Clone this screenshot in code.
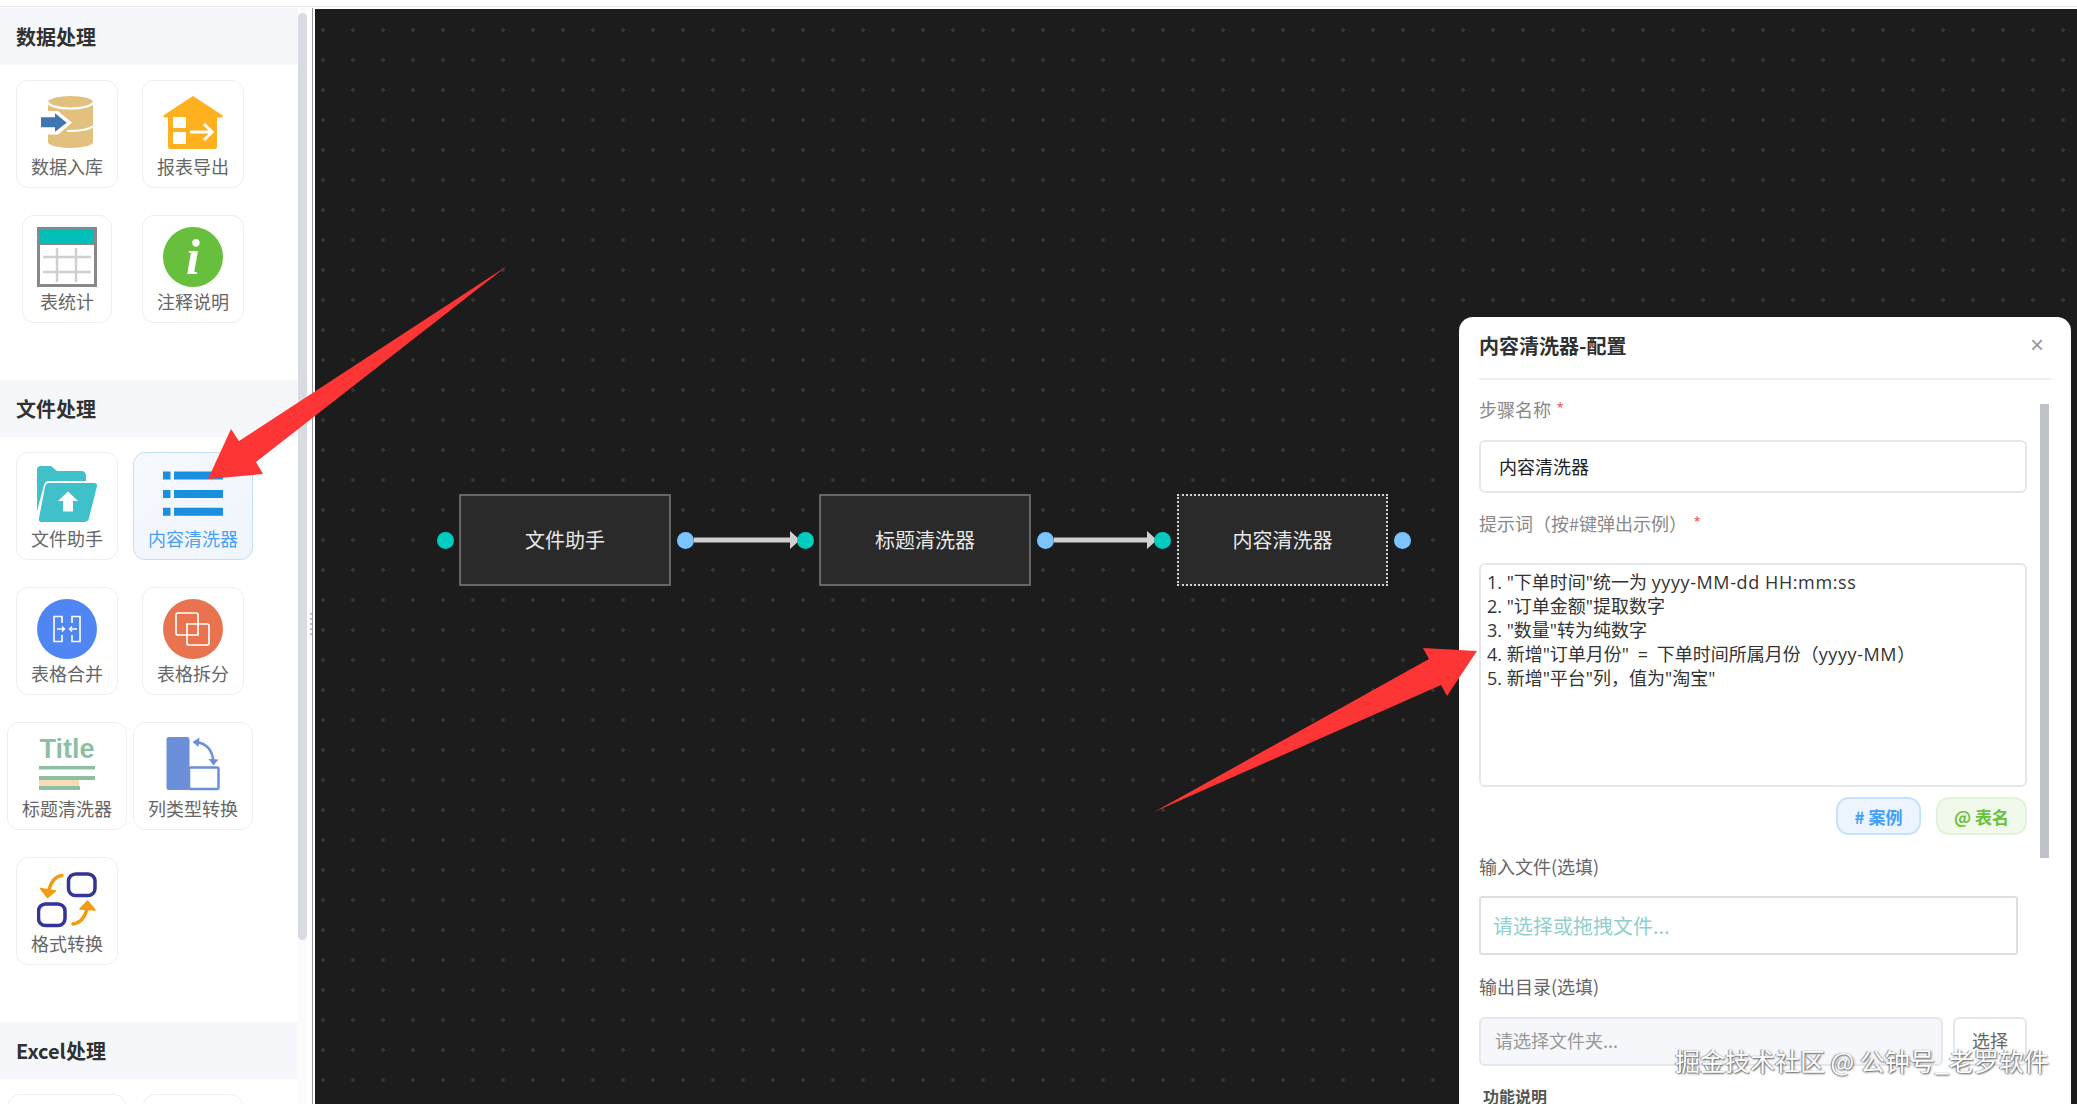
<div class="page">
	<aside class="sidebar">
		<div class="side-list">
			<!-- 数据处理 -->
			<h3 class="group-title">数据处理</h3>
			<div class="tools">
				<div class="cell">
					<div class="tool">
						<svg class="icon" viewBox="0 0 60 60">
							<path d="M11 10a22.5 6 0 0 1 45 0v40a22.5 6 0 0 1-45 0z" fill="#e2c07e" />
							<path d="M11 10a22.5 6.5 0 0 0 45 0M30 39c10 0 22-1 26-5" fill="none" stroke="#fff" stroke-width="2.2" />
							<path d="M9 19h12l14 11.7L21 42.5H9z" fill="#fff" />
							<path d="M4 25.3h14v-4l11.7 9.4L18 39.7v-4.4H4z" fill="#3f75b2" />
						</svg>
						<span class="tool-name">数据入库</span>
					</div>
				</div>
				<div class="cell">
					<div class="tool">
						<svg class="icon" viewBox="0 0 60 60">
							<path d="M30 4 59 23q2 2-1 2.500H54V55q0 2-2 2H7q-2 0-2-2V25.500H2q-3-.5-1-2.500z" fill="#ffb01f" />
							<path d="M10 25h13v11H10zM10 40h13v12H10z" fill="#fff" />
							<path d="M27 40h22M41 32l8 8-8 8" fill="none" stroke="#fff" stroke-width="3" />
						</svg>
						<span class="tool-name">报表导出</span>
					</div>
				</div>
				<div class="cell">
					<div class="tool">
						<svg class="icon" viewBox="0 0 60 60">
							<rect x="1.500" y="1.500" width="57" height="57" fill="#fff" stroke="#888" stroke-width="3" />
							<rect x="3" y="3" width="54" height="13" fill="#00bfb8" />
							<path d="M3 17h54" stroke="#888" stroke-width="2" />
							<path d="M6 30h48M6 45h48M20 21v34M39 21v34" stroke="#cfcfcf" stroke-width="2.500" />
						</svg>
						<span class="tool-name">表统计</span>
					</div>
				</div>
				<div class="cell">
					<div class="tool">
						<svg class="icon" viewBox="0 0 60 60">
							<circle cx="30" cy="30" r="30" fill="#67bf3d" />
							<text class="info-i" x="30" y="47" text-anchor="middle">i</text>
						</svg>
						<span class="tool-name">注释说明</span>
					</div>
				</div>
			</div>

			<!-- 文件处理 -->
			<h3 class="group-title">文件处理</h3>
			<div class="tools">
				<div class="cell">
					<div class="tool">
						<svg class="icon" viewBox="0 0 60 60">
							<path d="M0 6q0-4 4-4h10l6 5h24q5 0 5 5v5H12q-4 0-5 4L0 47z" fill="#40c0c9" />
							<path d="M12 19h45q3.500 0 3 3L52 54q-1 4-5 4H5q-4 0-3-4L8 23q.8-4 4-4z" fill="#40c0c9" />
							<path d="M31 27.500 41 37h-5v10.500H26V37h-5z" fill="#fff" />
						</svg>
						<span class="tool-name">文件助手</span>
					</div>
				</div>
				<div class="cell">
					<div class="tool active">
						<svg class="icon" viewBox="0 0 60 60">
							<path d="M0 7.500h7.500v8H0zM11 7.500h49v8H11zM0 26h7.500v8H0zM11 26h49v8H11zM0 43.800h7.500v8H0zM11 43.800h49v8H11z" fill="#1a8fdd" />
						</svg>
						<span class="tool-name">内容清洗器</span>
					</div>
				</div>
				<div class="cell">
					<div class="tool">
						<svg class="icon" viewBox="0 0 60 60">
							<circle cx="30" cy="30" r="30" fill="#4f86f4" />
							<path d="M25 17.500h-8v25h8zM35 17.500h8v25h-8z" fill="none" stroke="#fff" stroke-width="1.600" />
							<path d="M25 24v12M35 24v12" stroke="#4f86f4" stroke-width="3" />
							<path d="M20 30h7.500M25 27.500l2.500 2.500-2.500 2.500M40 30h-7.500M35 27.500 32.500 30l2.500 2.500" fill="none" stroke="#fff" stroke-width="1.400" />
						</svg>
						<span class="tool-name">表格合并</span>
					</div>
				</div>
				<div class="cell">
					<div class="tool">
						<svg class="icon" viewBox="0 0 60 60">
							<circle cx="30" cy="30" r="30" fill="#e9724f" />
							<path d="M24 36h-9q-2 0-2-2V16q0-2 2-2h18q2 0 2 2v9M35 25h9q2 0 2 2v17q0 2-2 2H26q-2 0-2-2v-8M24 25h11v11H24z" fill="none" stroke="#fff" stroke-width="1.700" />
						</svg>
						<span class="tool-name">表格拆分</span>
					</div>
				</div>
				<div class="cell">
					<div class="tool">
						<svg class="icon" viewBox="0 0 60 60">
							<text class="title-mark" x="30" y="24" text-anchor="middle">Title</text>
							<path d="M2 32h56v3.500H2zM2 42h56v4H2zM2 52h41v4H2z" fill="#8fbfa3" />
							<path d="M2 46h40v6H2z" fill="#f8d9b8" />
						</svg>
						<span class="tool-name">标题清洗器</span>
					</div>
				</div>
				<div class="cell">
					<div class="tool">
						<svg class="icon" viewBox="0 0 60 60">
							<rect x="3.500" y="3" width="23" height="53" rx="2.500" fill="#6b8fd8" />
							<rect x="26" y="33.500" width="29.500" height="21.500" rx="1.500" fill="none" stroke="#6b8fd8" stroke-width="2.500" />
							<path d="M33 8q16 2 17.500 20" fill="none" stroke="#6b8fd8" stroke-width="2.500" />
							<path d="M36.500 3.500 29.500 8l6 5zM45.500 25l10 .5-5 6z" fill="#6b8fd8" />
						</svg>
						<span class="tool-name">列类型转换</span>
					</div>
				</div>
				<div class="cell">
					<div class="tool">
						<svg class="icon" viewBox="0 0 60 60">
							<rect x="31.500" y="5" width="26.500" height="21.500" rx="7" fill="none" stroke="#333399" stroke-width="3.500" />
							<rect x="1.500" y="35" width="26.500" height="21.500" rx="7" fill="none" stroke="#333399" stroke-width="3.500" />
							<path d="M25 6.500Q14 8 11.500 24M36 55q12-2 14.500-18" fill="none" stroke="#f39c12" stroke-width="3.500" stroke-linecap="round" />
							<path d="M3.500 19.500 10.500 28.500 18.500 22zM43 40l7.500-8 7.500 9z" fill="#f39c12" stroke="#f39c12" stroke-width="1.500" stroke-linejoin="round" />
						</svg>
						<span class="tool-name">格式转换</span>
					</div>
				</div>
			</div>

			<!-- Excel处理，下面的卡片在视口外 -->
			<h3 class="group-title">Excel处理</h3>
			<div class="tools">
				<div class="cell"><div class="tool blank-wide"></div></div>
				<div class="cell"><div class="tool blank"></div></div>
			</div>
		</div>
		<div class="side-scroll"><div class="side-thumb"></div></div>
		<div class="grip"></div>
	</aside>

	<main class="canvas">
		<!-- 节点 -->
		<div class="node" style="left: 144px; top: 485px;">文件助手</div>
		<div class="node" style="left: 504px; top: 485px;">标题清洗器</div>
		<div class="node selected" style="left: 862px; top: 485px;">内容清洗器</div>

		<svg class="edges" width="1762" height="1095">
			<path d="M379 531h97M739 531h94" stroke="#d0d0d0" stroke-width="5" />
			<path d="M475 522l10 9-10 9zM832 522l10 9-10 9z" fill="#d0d0d0" />
		</svg>

		<span class="port in" style="left: 122px; top: 523px;"></span>
		<span class="port out" style="left: 362px; top: 523px;"></span>
		<span class="port in" style="left: 482px; top: 523px;"></span>
		<span class="port out" style="left: 722px; top: 523px;"></span>
		<span class="port in" style="left: 839px; top: 523px;"></span>
		<span class="port out" style="left: 1079px; top: 523px;"></span>

		<section class="panel">
			<header class="panel-head">
				<span class="panel-title">内容清洗器-配置</span>
				<span class="panel-close">×</span>
			</header>
			<div class="panel-body">
				<div class="field-label first">步骤名称<i class="req">*</i></div>
				<div class="text-input">内容清洗器</div>

				<div class="field-label prompt">提示词（按#键弹出示例）<i class="req wide">*</i></div>
				<div class="prompt-box">
					<div>1. "下单时间"统一为 <span class="lat">yyyy-MM-dd HH:mm:ss</span></div>
					<div>2. "订单金额"提取数字</div>
					<div>3. "数量"转为纯数字</div>
					<div>4. 新增"订单月份" <span class="eq">=</span> 下单时间所属月份（<span class="lat">yyyy-MM</span>）</div>
					<div>5. 新增"平台"列，值为"淘宝"</div>
				</div>
				<div class="prompt-tools">
					<span class="chip blue"># 案例</span>
					<span class="chip green">@ 表名</span>
				</div>

				<div class="field-label file">输入文件(选填)</div>
				<div class="drop-input">请选择或拖拽文件...</div>

				<div class="field-label out">输出目录(选填)</div>
				<div class="dir-row">
					<div class="dir-input">请选择文件夹...</div>
					<div class="dir-btn">选择</div>
				</div>

				<div class="help-title">功能说明</div>
			</div>
			<div class="panel-thumb"></div>
		</section>
	</main>

	<!-- 截图上加的红色箭头 -->
	<svg class="marks" width="2077" height="1104">
		<polygon points="507,266 239,441 231,429 208,479 263,474 256,462" fill="#fd3535" />
		<polygon points="1154,812 1429,659 1423,648 1477,651 1447,696 1441,685" fill="#fd3535" />
	</svg>
	<div class="watermark">掘金技术社区 @ 公钟号_老罗软件</div>
</div>

<style>
	:global(body) {
		margin: 0;
		background: #fff;
	}

	.page {
		position: relative;
		display: flex;
		width: 2077px;
		height: 1104px;
		padding-top: 8px;
		box-sizing: border-box;
		overflow: hidden;
		font-family: 'Noto Sans CJK SC', 'Open Sans', sans-serif;
		background: linear-gradient(#fff 6px, #e3e5ea 6px, #e3e5ea 7px, #fff 7px);
	}

	/* Sidebar */
	.sidebar {
		position: relative;
		display: flex;
		flex: 0 0 315px;
		height: 100%;
		border-right: 2px solid #fff;
		box-sizing: border-box;
		box-shadow: inset -1px 0 0 #999;
	}
	.side-list {
		flex: 0 0 298px;
		overflow: hidden;
	}
	.group-title {
		margin: 0;
		height: 57px;
		padding-left: 16px;
		font-size: 20px;
		line-height: 57px;
		font-weight: 700;
		color: #303133;
		background: #f5f7fb;
	}
	.tools {
		display: grid;
		grid-template-columns: 126px 126px;
		row-gap: 27px;
		padding: 15px 0 57px 4px;
	}
	.cell {
		display: flex;
		justify-content: center;
	}
	.tool {
		display: flex;
		flex-direction: column;
		align-items: center;
		height: 108px;
		padding: 11px 14px 8px;
		box-sizing: border-box;
		border: 1px solid #eceef2;
		border-radius: 12px;
		background: #fff;
	}
	.tool.active {
		border-color: #c6dff5;
		background: linear-gradient(135deg, #f6f9fe, #f0f5fc);
	}
	.tool.active .tool-name {
		color: #4a9ff5;
	}
	.blank {
		width: 100px;
	}
	.blank-wide {
		width: 118px;
	}
	.icon {
		display: block;
		width: 60px;
		height: 60px;
	}
	.tool-name {
		margin-top: 2px;
		font-size: 18px;
		line-height: 24px;
		color: #666;
		white-space: nowrap;
	}
	.info-i {
		font-family: 'Liberation Serif', serif;
		font-style: italic;
		font-weight: 700;
		font-size: 50px;
		fill: #fff;
	}
	.title-mark {
		font-family: 'Liberation Sans', sans-serif;
		font-weight: 700;
		font-size: 27px;
		fill: #8fbfa3;
	}
	.side-scroll {
		flex: 0 0 9px;
		padding-top: 5px;
		background: #fbfbfc;
	}
	.side-thumb {
		height: 927px;
		border-radius: 5px;
		background: #d8dbe2;
	}
	.grip {
		position: absolute;
		left: 310px;
		top: 605px;
		width: 2px;
		height: 24px;
		background: repeating-linear-gradient(#bbb 0 2px, transparent 2px 5px);
	}

	/* Canvas */
	.canvas {
		position: relative;
		flex: 1;
		height: 1095px;
		margin-top: 1px;
		background-color: #1c1c1c;
		background-image: radial-gradient(circle, #343434 1.6px, transparent 2.1px);
		background-size: 30px 30px;
		background-position: -7px 6px;
	}
	.node {
		position: absolute;
		display: flex;
		align-items: center;
		justify-content: center;
		width: 212px;
		height: 92px;
		padding-bottom: 2px;
		box-sizing: border-box;
		border: 2px solid #666;
		background: #2a2a2a;
		color: #e8e8e8;
		font-size: 20px;
	}
	.node.selected {
		width: 211px;
		border: 2px dotted #d0d0d0;
	}
	.edges {
		position: absolute;
		left: 0;
		top: 0;
	}
	.port {
		position: absolute;
		width: 17px;
		height: 17px;
		border-radius: 50%;
	}
	.port.in {
		background: #00cdc0;
	}
	.port.out {
		background: #7cc4ff;
	}

	/* Config panel */
	.panel {
		position: absolute;
		left: 1144px;
		top: 308px;
		width: 612px;
		height: 820px;
		padding: 0 20px;
		box-sizing: border-box;
		border-radius: 14px;
		background: #fff;
	}
	.panel-head {
		display: flex;
		align-items: center;
		justify-content: space-between;
		height: 56px;
		padding-bottom: 5px;
		border-bottom: 2px solid #eeeeee;
	}
	.panel-title {
		font-size: 20px;
		font-weight: 700;
		color: #303133;
	}
	.panel-close {
		margin-right: 7px;
		font-family: 'Liberation Sans', sans-serif;
		font-size: 24px;
		line-height: 1;
		color: #999;
	}
	.panel-body {
		width: 548px;
	}
	.field-label {
		font-size: 18px;
		line-height: 24px;
		color: #888;
		white-space: nowrap;
	}
	.field-label.first {
		margin-top: 17px;
	}
	.field-label.prompt {
		margin-top: 18px;
	}
	.field-label.file {
		margin-top: 19px;
		color: #666;
	}
	.field-label.out {
		margin-top: 19px;
		color: #666;
	}
	.req {
		position: relative;
		top: -1px;
		margin-left: 5px;
		font-style: normal;
		color: #f56c6c;
	}
	.req.wide {
		margin-left: 6px;
	}
	.text-input {
		height: 53px;
		margin-top: 19px;
		padding-left: 18px;
		box-sizing: border-box;
		border: 2px solid #e4e7ed;
		border-radius: 6px;
		font-size: 18px;
		line-height: 49px;
		color: #222;
	}
	.prompt-box {
		height: 224px;
		margin-top: 28px;
		padding: 5px 6px;
		box-sizing: border-box;
		border: 2px solid #e4e7ed;
		border-radius: 6px;
		font-family: 'Open Sans', 'Noto Sans CJK SC', sans-serif;
		font-size: 18px;
		line-height: 24px;
		color: #333;
		white-space: nowrap;
	}
	.lat {
		letter-spacing: 0.6px;
	}
	.eq {
		margin: 0 4px;
	}
	.prompt-tools {
		display: flex;
		justify-content: flex-end;
		gap: 15px;
		margin-top: 10px;
	}
	.chip {
		display: flex;
		align-items: center;
		justify-content: center;
		height: 38px;
		box-sizing: border-box;
		border: 2px solid;
		border-radius: 13px;
		font-size: 17px;
		font-weight: 700;
		white-space: pre;
	}
	.chip.blue {
		width: 85px;
		background: #ecf5ff;
		border-color: #c6e2ff;
		color: #409eff;
	}
	.chip.green {
		width: 91px;
		background: #f0f9eb;
		border-color: #e1f3d8;
		color: #67c23a;
	}
	.drop-input {
		width: 539px;
		height: 59px;
		margin-top: 18px;
		padding-left: 12px;
		box-sizing: border-box;
		border: 2px solid #dcdfe6;
		border-radius: 3px;
		font-size: 20px;
		line-height: 55px;
		color: #8fd0cc;
	}
	.dir-row {
		display: flex;
		gap: 10px;
		margin-top: 19px;
	}
	.dir-input {
		flex: 1;
		height: 49px;
		padding-left: 14px;
		box-sizing: border-box;
		border: 2px solid #e4e7ed;
		border-radius: 6px;
		background: #f5f7fa;
		font-size: 18px;
		line-height: 43px;
		color: #999;
	}
	.dir-btn {
		flex: 0 0 74px;
		height: 49px;
		box-sizing: border-box;
		border: 2px solid #e4e7ed;
		border-radius: 6px;
		text-align: center;
		font-size: 18px;
		line-height: 43px;
		color: #666;
	}
	.help-title {
		margin-top: 18px;
		padding-left: 4px;
		font-size: 16px;
		line-height: 24px;
		font-weight: 700;
		color: #555;
	}
	.panel-thumb {
		position: absolute;
		left: 581px;
		top: 87px;
		width: 9px;
		height: 454px;
		background: #bfc2c8;
	}

	/* Overlays added on the screenshot */
	.marks {
		position: absolute;
		left: 0;
		top: 0;
		pointer-events: none;
	}
	.watermark {
		position: absolute;
		left: 1675px;
		top: 1042px;
		font-size: 25px;
		line-height: 36px;
		color: #fff;
		white-space: nowrap;
		text-shadow: 1px 1px 2px #555, -1px 0 1px #888;
	}
</style>
